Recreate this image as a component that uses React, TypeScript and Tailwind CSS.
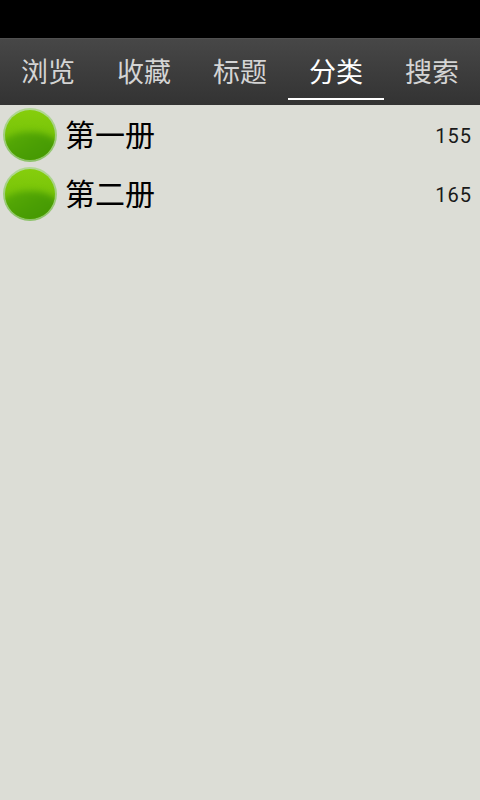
const tabs = ["浏览", "收藏", "标题", "分类", "搜索"];
const active = "分类";

const books = [
  { title: "第一册", count: 155 },
  { title: "第二册", count: 165 },
];

function Ball() {
  return (
    <div className="h-[54px] w-[54px] shrink-0 rounded-full bg-gradient-to-b from-[#b4d896] to-[#8cc268] p-[2px] blur-[0.5px]">
      <div className="relative h-full w-full overflow-hidden rounded-full bg-gradient-to-b from-[#86ce0c] to-[#6aba06]">
        <div className="absolute -inset-x-[6px] -bottom-[8px] h-[36px] rounded-[50%] bg-gradient-to-br from-[#5cae06] via-[#4a9e04] to-[#3f9202] blur-[3px]" />
      </div>
    </div>
  );
}

export default function App() {
  return (
    <div className="flex h-[800px] w-[480px] flex-col overflow-hidden bg-[#dcddd6] font-['Roboto','Noto_Sans_CJK_SC',sans-serif]">
      <div className="h-[38px] bg-black" />
      <div className="flex h-[67px] items-start border-t border-[#505050] bg-gradient-to-b from-[#474747] to-[#333333]">
        {tabs.map((tab) => (
          <div
            key={tab}
            className={`flex h-[61px] w-[96px] items-center justify-center border-b-[2px] pt-[9px] text-[27px] ${
              tab === active ? "border-white text-white" : "border-transparent text-[#d4d4d4]"
            }`}
          >
            {tab}
          </div>
        ))}
      </div>
      <div className="flex flex-col">
        {books.map((book) => (
          <div key={book.title} className="flex h-[59px] items-center pl-[3px] pr-[8px]">
            <Ball />
            <span className="ml-[8px] pt-[3px] text-[30px] leading-none text-black">{book.title}</span>
            <span className="ml-auto pt-[2px] text-[20px] leading-none tracking-[1px] text-[#1a1a1a]">{book.count}</span>
          </div>
        ))}
      </div>
    </div>
  );
}
